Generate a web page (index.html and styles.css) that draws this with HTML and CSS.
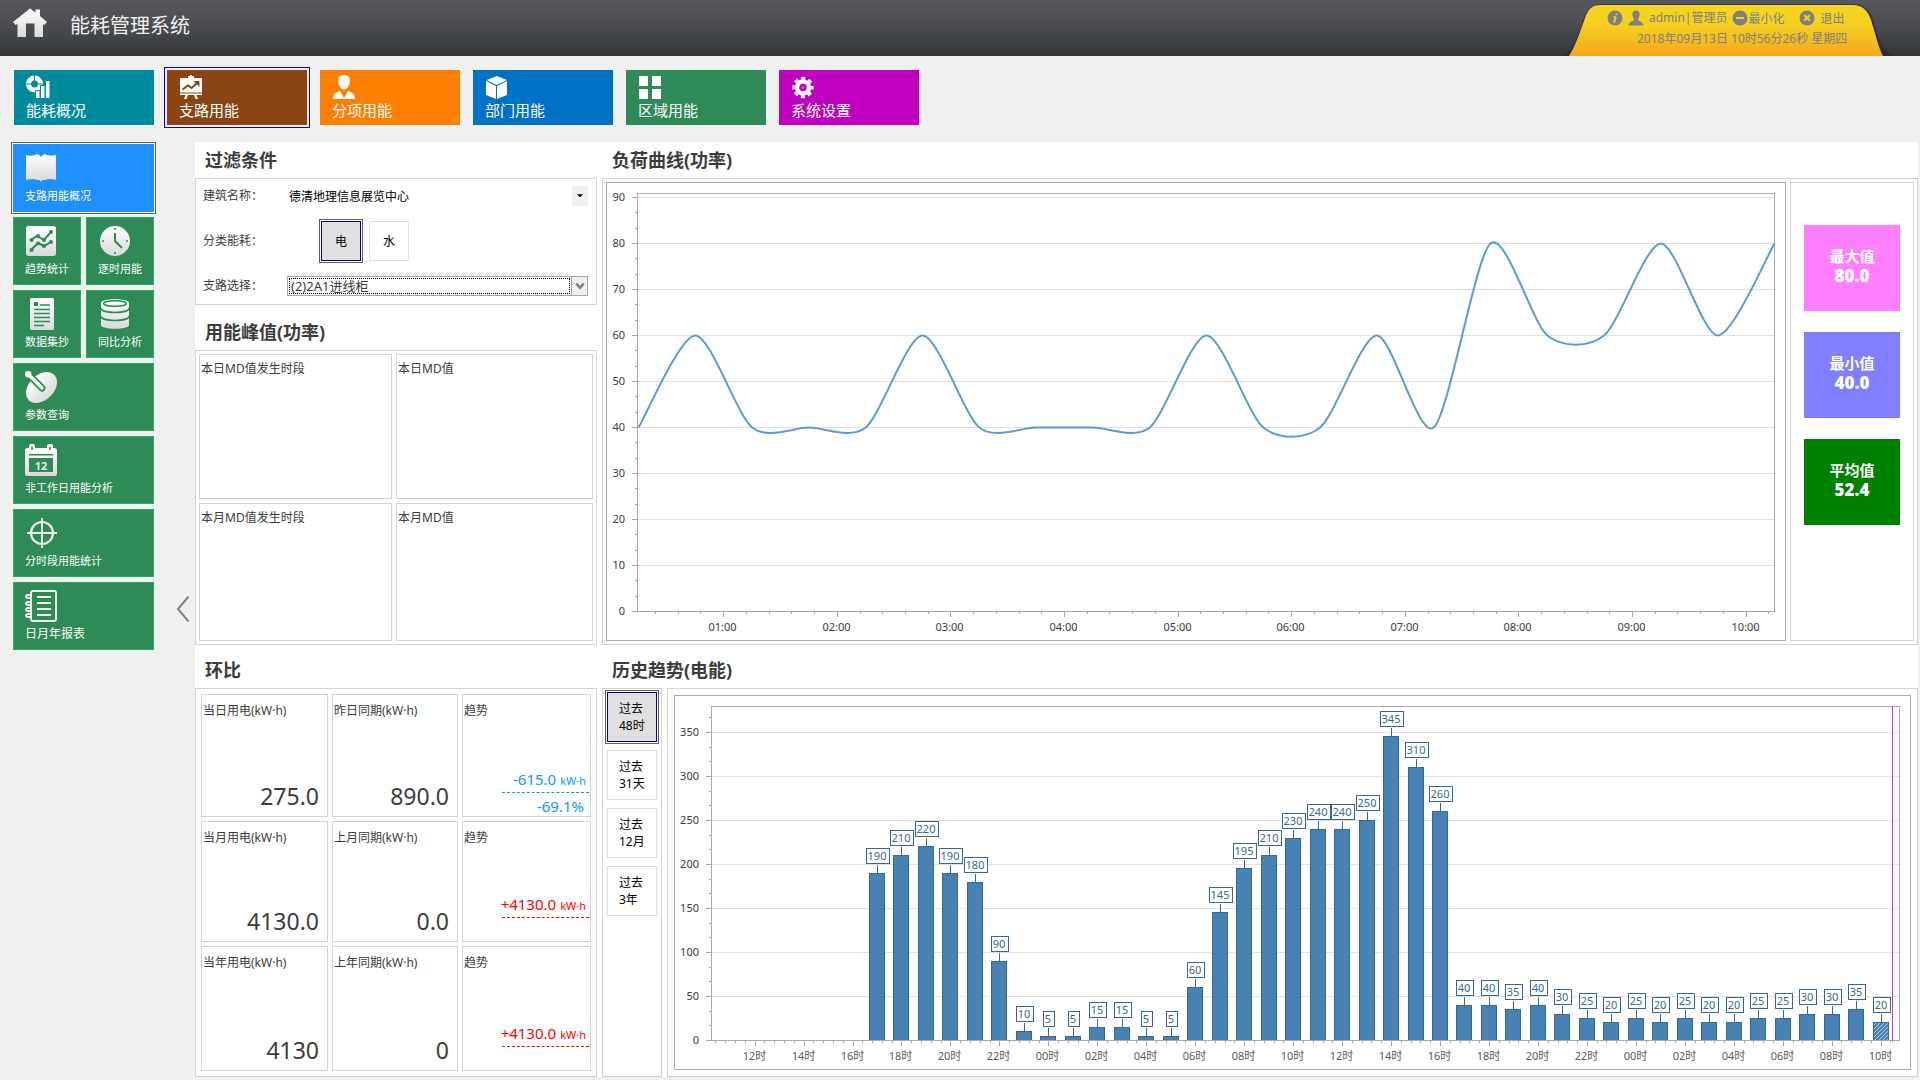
FILE: index.html
```html
<!DOCTYPE html>
<html lang="zh-CN">
<head>
    <meta charset="UTF-8">
    <meta name="viewport" content="width=device-width, initial-scale=1.0">
    <title>能耗管理系统</title>
    <link rel="stylesheet" href="styles.css">
</head>
<body>
    <header class="topbar">
        <svg class="home-icon" viewBox="0 0 34 30" aria-hidden="true">
            <defs>
                <linearGradient id="silver" x1="0" y1="0" x2="0" y2="1">
                    <stop offset="0" stop-color="#ffffff"/>
                    <stop offset="1" stop-color="#d9d9d9"/>
                </linearGradient>
            </defs>
            <path fill="url(#silver)" d="M17 0.5 L22.5 4.5 V1.5 H27 V8 L34 14 L31.5 17 L30 16 V29 H21.500 V15.500 H13 V29 H4.500 V16 L2.500 17 L0 14 Z"/>
        </svg>
        <h1>能耗管理系统</h1>
        <div class="user-tab">
            <svg class="tab-shape" viewBox="0 0 340 56" aria-hidden="true">
                <defs>
                    <linearGradient id="gold" x1="0" y1="0" x2="0" y2="1">
                        <stop offset="0" stop-color="#f5d521"/>
                        <stop offset="0.4" stop-color="#f4cf22"/>
                        <stop offset="1" stop-color="#f4a71a"/>
                    </linearGradient>
                </defs>
                <path fill="#26282b" fill-opacity="0.6" d="M0 56 C12 54 18 38 23 20 Q28 5 40 4 H293 Q309 4 314 22 C320 42 324 55 338 56 Z"/>
                <path fill="url(#gold)" d="M9 56 C16 45 20 32 25 18 Q29 5 40 5 H293 Q306 5 311 20 C316 36 318 46 323 56 Z"/>
            </svg>
            <div class="user-row">
                <button class="tab-btn" aria-label="信息">
                    <svg viewBox="0 0 16 16"><circle cx="8" cy="8" r="7.500" fill="#808080"/><path d="M9.500 3.500 V5 M9 7 L7 12.500 M6.500 7.200 H9" stroke="#f4d022" stroke-width="1.800" fill="none"/></svg>
                </button>
                <svg viewBox="0 0 16 16" aria-hidden="true"><path fill="#808080" d="M8 0.500 C11.500 0.500 12 3.500 11.500 5.500 C11 8 10.200 9 10 10 C11 11.500 15 11.500 15.500 15.500 H0.500 C1 11.500 5 11.500 6 10 C5.800 9 5 8 4.500 5.500 C4 3.500 4.500 0.500 8 0.500 Z"/></svg>
                <span>admin|管理员</span>
                <button class="tab-btn">
                    <svg viewBox="0 0 16 16"><circle cx="8" cy="8" r="7.500" fill="#808080"/><path d="M4 8 H12" stroke="#f4d022" stroke-width="2"/></svg>最小化
                </button>
                <button class="tab-btn exit">
                    <svg viewBox="0 0 16 16"><circle cx="8" cy="8" r="7.500" fill="#808080"/><path d="M5.200 5.200 L10.800 10.800 M10.800 5.200 L5.200 10.800" stroke="#f4d022" stroke-width="2.200"/></svg>退出
                </button>
            </div>
            <div class="clock">2018年09月13日 10时56分26秒 星期四</div>
        </div>
    </header>

    <nav class="main-nav">
        <button class="nav-tile teal">
            <svg viewBox="0 0 24 24" fill="#fff"><path fill-rule="evenodd" d="M8.500 0.500 A8.500 8.500 0 1 0 8.500 17.500 A8.500 8.500 0 1 0 8.500 0.500 Z M8.500 5.500 A3.500 3.500 0 1 1 8.500 12.500 A3.500 3.500 0 1 1 8.500 5.500 Z"/><path d="M8.500 0 V6 M0 9 H5.500 M11.500 9 H17.500" stroke="#008b9d" stroke-width="1.200"/><path stroke="#008b9d" d="M9.500 15.500 H14 V23.500 H9.500 Z M14.500 10.500 H19 V23.500 H14.500 Z M19.500 5.500 H24 V23.500 H19.500 Z"/></svg>
            能耗概况
        </button>
        <button class="nav-tile brown selected">
            <svg viewBox="0 0 24 24" fill="#fff"><path d="M9 1 H11 V0 H13 V1 H15 V3 H23 V17.500 H1 V3 H9 Z M1 18.500 H23 V20 H17.500 L19 24 H16.500 L15 20 H9 L7.500 24 H5 L6.500 20 H1 Z"/><path d="M3.500 14.500 L9 10.500 L12.500 13 L18 8" fill="none" stroke="#8b4513" stroke-width="2"/><path fill="#8b4513" d="M14.500 6 H20.500 V12 Z"/></svg>
            支路用能
        </button>
        <button class="nav-tile orange">
            <svg viewBox="0 0 24 24" fill="#fff"><path d="M12 0 C17.500 0 18.500 4 17.500 8 C16.500 12 14.500 14.500 12 14.500 C9.500 14.500 7.500 12 6.500 8 C5.500 4 6.500 0 12 0 Z M8 16 L12 23 L16 16 C20 17.500 23 19 23 24 H1 C1 19 4 17.500 8 16 Z"/></svg>
            分项用能
        </button>
        <button class="nav-tile blue">
            <svg viewBox="0 0 24 24" fill="#fff"><path d="M12 1 L22 5 L11.500 10 L1.500 5 Z M1 6 L11 11 V24 L1 20 Z M22 6 L12 11 V24 L22 20 Z"/></svg>
            部门用能
        </button>
        <button class="nav-tile green">
            <svg viewBox="0 0 24 24" fill="#fff"><path d="M1 1 H10 V11 H1 Z M14 1 H23 V11 H14 Z M1 14 H10 V24 H1 Z M14 14 H23 V24 H14 Z"/></svg>
            区域用能
        </button>
        <button class="nav-tile purple">
            <svg viewBox="0 0 24 24"><circle cx="12" cy="12.500" r="6" fill="none" stroke="#fff" stroke-width="4.500"/><circle cx="12" cy="12.500" r="9" fill="none" stroke="#fff" stroke-width="3.400" stroke-dasharray="3.900 3.169" stroke-dashoffset="1.950"/><circle cx="12" cy="12.500" r="1.600" fill="#fff" fill-opacity="0.300"/></svg>
            系统设置
        </button>
    </nav>

    <div class="page">
        <aside class="side-menu">
            <button class="side-tile wide selected">
                <svg viewBox="0 0 32 32"><path fill="url(#silver)" d="M1 3 Q8 5 12 2 Q14 2 16 5 Q18 2 20 2 Q24 5 31 3 V28 Q24 26 20 28 L17.500 28 L16 30 L14.500 28 L12 28 Q8 26 1 28 Z"/></svg>
                支路用能概况
            </button>
            <button class="side-tile">
                <svg viewBox="0 0 32 32"><rect x="1" y="1" width="30" height="30" rx="2.500" fill="url(#silver)"/><g fill="none" stroke="#2e8b57" stroke-width="2"><path d="M6 15 L12 11 L19 15 L26 7"/><path d="M6 25 L13 18 L19 21 L26 17"/></g><g fill="#2e8b57"><circle cx="6.500" cy="15" r="2"/><circle cx="13" cy="11" r="2"/><circle cx="19" cy="15" r="2"/><circle cx="26" cy="7" r="2"/><circle cx="6.500" cy="25" r="2"/><circle cx="13" cy="18.500" r="2"/><circle cx="19" cy="21" r="2"/><circle cx="26" cy="17" r="2"/></g></svg>
                趋势统计
            </button>
            <button class="side-tile">
                <svg viewBox="0 0 32 32"><circle cx="17" cy="16" r="15" fill="url(#silver)"/><path d="M17 8 V16 L24 23" fill="none" stroke="#2e8b57" stroke-width="2"/><g fill="#2e8b57"><circle cx="17" cy="4" r="1"/><circle cx="17" cy="28" r="1"/><circle cx="5" cy="16" r="1"/><circle cx="29" cy="16" r="1"/></g></svg>
                逐时用能
            </button>
            <button class="side-tile">
                <svg viewBox="0 0 32 32"><rect x="5" width="24" height="32" rx="1.500" fill="url(#silver)"/><rect x="9" y="4" width="4" height="4" fill="#2e8b57"/><path d="M15 7 H25 M9 11.500 H25 M9 15.500 H25 M9 19.500 H25 M9 23.500 H25 M9 27.500 H19" stroke="#2e8b57" stroke-width="1.500"/></svg>
                数据集抄
            </button>
            <button class="side-tile">
                <svg viewBox="0 0 32 32"><path fill="url(#silver)" d="M3 5 C3 0 31 0 31 5 V27 C31 32 3 32 3 27 Z"/><g fill="none" stroke="#2e8b57" stroke-width="1.600"><ellipse cx="17" cy="5.500" rx="11.500" ry="2.800"/><path d="M3 10 C3 16 31 16 31 10 M3 18 C3 24 31 24 31 18"/></g></svg>
                同比分析
            </button>
            <button class="side-tile wide">
                <svg viewBox="0 0 32 32"><ellipse cx="16.500" cy="16.500" rx="18" ry="12.500" transform="rotate(-45 16.500 16.500)" fill="url(#silver)"/><path d="M3 3 L17 17" stroke="#2e8b57" stroke-width="7" stroke-linecap="round"/><path d="M3 3 L17 17" stroke="#f4f4f4" stroke-width="3.500" stroke-linecap="round"/><circle cx="3.200" cy="3.200" r="3.200" fill="#fff"/></svg>
                参数查询
            </button>
            <button class="side-tile wide">
                <svg viewBox="0 0 32 32"><rect y="4" width="32" height="28" rx="2.500" fill="url(#silver)"/><rect x="4" width="6" height="7" rx="2" fill="#fff"/><rect x="22" width="6" height="7" rx="2" fill="#fff"/><path d="M7 3 V6 M25 3 V6 M4 10.800 H28" stroke="#2e8b57" stroke-width="1.600"/><rect x="4" y="14" width="24" height="14" fill="#2e8b57"/><text x="16" y="26" class="cal-day">12</text></svg>
                非工作日用能分析
            </button>
            <button class="side-tile wide">
                <svg viewBox="0 0 32 32" fill="none" stroke="#f0f0f0"><circle cx="17" cy="16" r="11" stroke-width="2.200"/><path d="M17 1 V31 M2 16 H32" stroke-width="1.800"/></svg>
                分时段用能统计
            </button>
            <button class="side-tile wide report">
                <svg viewBox="0 0 32 32" fill="none" stroke="#f0f0f0"><rect x="6" y="1" width="25" height="30" rx="2" stroke-width="2"/><path d="M12 7 H26 M12 13 H26 M12 19 H26 M12 25 H26" stroke-width="2"/><path d="M7 5 H3 Q1 5 1 7 Q1 8 3 8 H7 M7 12 H3 Q1 12 1 13.500 Q1 15 3 15 H7 M7 18 H3 Q1 18 1 19.500 Q1 21 3 21 H7 M7 24 H3 Q1 24 1 25.500 Q1 27 3 27 H7" stroke-width="1.800"/></svg>
                日月年报表
            </button>
        </aside>

        <button class="collapse" aria-label="收起菜单">
            <svg viewBox="0 0 14 26"><path d="M12.500 0.500 L2 13 L12.500 25.500" fill="none" stroke="#808080" stroke-width="2"/></svg>
        </button>

        <main class="content">
            <div class="column">
                <section class="block">
                    <h2>过滤条件</h2>
                    <form class="panel filter">
                        <div class="field">
                            <label for="building">建筑名称：</label>
                            <div class="picker flat">
                                <select id="building">
                                    <option>德清地理信息展览中心</option>
                                </select>
                                <span class="arrow"><svg viewBox="0 0 8 8"><path d="M1.500 2.500 H6.500 L4 5 Z" fill="#000"/></svg></span>
                            </div>
                        </div>
                        <div class="field">
                            <span class="field-name">分类能耗：</span>
                            <div class="kinds">
                                <button type="button" class="choice selected">电</button>
                                <button type="button" class="choice">水</button>
                            </div>
                        </div>
                        <div class="field">
                            <label for="branch">支路选择：</label>
                            <div class="picker boxed">
                                <select id="branch">
                                    <option>(2)2A1进线柜</option>
                                </select>
                                <span class="arrow"><svg viewBox="0 0 8 8"><path d="M1 2 L4 5.500 L7 2" fill="none" stroke="#808080" stroke-width="2"/></svg></span>
                            </div>
                        </div>
                    </form>
                </section>
                <section class="block grow">
                    <h2>用能峰值(功率)</h2>
                    <div class="panel peak">
                        <div class="cell">本日MD值发生时段</div>
                        <div class="cell">本日MD值</div>
                        <div class="cell">本月MD值发生时段</div>
                        <div class="cell">本月MD值</div>
                    </div>
                </section>
            </div>

            <section class="block">
                <h2>负荷曲线(功率)</h2>
                <div class="panel load">
                    <div class="chart-box">
                        <svg id="loadChart" class="chart load-chart"></svg>
                    </div>
                    <div class="stats">
                        <div class="stat max">最大值<strong>80.0</strong></div>
                        <div class="stat min">最小值<strong>40.0</strong></div>
                        <div class="stat avg">平均值<strong>52.4</strong></div>
                    </div>
                </div>
            </section>

            <section class="block">
                <h2>环比</h2>
                <div class="panel compare">
                    <div class="cell">当日用电(kW·h)<span class="number">275.0</span></div>
                    <div class="cell">昨日同期(kW·h)<span class="number">890.0</span></div>
                    <div class="cell">趋势
                        <div class="trend down">
                            <div class="delta">-615.0 <small>kW·h</small></div>
                            <div class="percent">-69.1%</div>
                        </div>
                    </div>
                    <div class="cell">当月用电(kW·h)<span class="number">4130.0</span></div>
                    <div class="cell">上月同期(kW·h)<span class="number">0.0</span></div>
                    <div class="cell">趋势
                        <div class="trend up">
                            <div class="delta">+4130.0 <small>kW·h</small></div>
                            <div class="percent"></div>
                        </div>
                    </div>
                    <div class="cell">当年用电(kW·h)<span class="number">4130</span></div>
                    <div class="cell">上年同期(kW·h)<span class="number">0</span></div>
                    <div class="cell">趋势
                        <div class="trend up">
                            <div class="delta">+4130.0 <small>kW·h</small></div>
                            <div class="percent"></div>
                        </div>
                    </div>
                </div>
            </section>

            <section class="block">
                <h2>历史趋势(电能)</h2>
                <div class="history">
                    <div class="panel ranges">
                        <button class="choice range selected">过去<br>48时</button>
                        <button class="choice range">过去<br>31天</button>
                        <button class="choice range">过去<br>12月</button>
                        <button class="choice range">过去<br>3年</button>
                    </div>
                    <div class="panel history-panel">
                        <div class="chart-box">
                            <svg id="historyChart" class="chart history-chart"></svg>
                        </div>
                    </div>
                </div>
            </section>
        </main>
    </div>

    <script src="charts.js"></script>
</body>
</html>
```

FILE: styles.css
```css
* {
    box-sizing: border-box;
}
body {
    margin: 0;
    background: #f0f0f0;
    font-family: "Noto Sans", "Noto Sans CJK SC", sans-serif;
    font-size: 12px;
    line-height: 18px;
    color: #3c3c3c;
}
button, select {
    font-family: inherit;
    font-size: inherit;
    cursor: pointer;
}
h1, h2 {
    margin: 0;
}

/* top bar */
.topbar {
    display: flex;
    height: 56px;
    padding-left: 13px;
    background: linear-gradient(#57585d, #4c4d51 45%, #323638);
    color: #f0f0f0;
}
.home-icon {
    width: 34px;
    height: 30px;
    margin: 8px 23px 0 0;
}
.topbar h1 {
    font-size: 20px;
    font-weight: normal;
    line-height: 52px;
}
.user-tab {
    position: relative;
    width: 340px;
    margin-left: auto;
    margin-right: 20px;
    padding: 8px 0 0 47px;
    color: #808080;
    white-space: nowrap;
}
.tab-shape {
    position: absolute;
    left: 0;
    top: 0;
    width: 340px;
    height: 56px;
}
.user-row {
    position: relative;
    display: flex;
    align-items: center;
    height: 20px;
    gap: 5px;
}
.user-row svg {
    width: 16px;
    height: 16px;
}
.tab-btn {
    display: flex;
    align-items: center;
    padding: 0;
    border: none;
    background: none;
    color: #808080;
}
.exit {
    margin-left: 10px;
    gap: 5px;
}
.clock {
    position: relative;
    padding-left: 30px;
    line-height: 22px;
}

/* coloured tiles under the top bar */
.main-nav {
    display: flex;
    flex-wrap: wrap;
    gap: 13px;
    padding: 14px 14px 17px;
}
.nav-tile {
    display: flex;
    flex-direction: column;
    align-items: flex-start;
    width: 140px;
    height: 55px;
    padding: 5px 12px 0;
    border: none;
    color: #fff;
    font-size: 15px;
    line-height: 22px;
}
.nav-tile svg {
    width: 24px;
    height: 24px;
}
.teal { background: #008b9d; }
.brown { background: #8b4513; }
.orange { background: #ff8000; }
.blue { background: #0072c6; }
.green { background: #2e8b57; }
.purple { background: #c000c0; }
.nav-tile.selected {
    outline: 1px solid #0000ff;
    outline-offset: 2px;
}

.page {
    display: flex;
    padding: 0 2px 3px 13px;
}

/* left menu */
.side-menu {
    display: grid;
    grid-template-columns: 68px 68px;
    grid-auto-rows: 68px;
    gap: 5px;
    align-self: flex-start;
    padding-top: 2px;
}
.side-tile {
    display: flex;
    flex-direction: column;
    align-items: flex-start;
    gap: 4px;
    padding: 7px 0 0 11px;
    border: 1px solid #32a866;
    background: #2e8b57;
    color: #fff;
    font-size: 11px;
    line-height: 16px;
}
.side-tile svg {
    width: 32px;
    height: 32px;
}
.side-tile.wide {
    grid-column: span 2;
}
.side-tile.report {
    font-size: 12px;
}
.side-tile.selected {
    background: #1e90ff;
    border-color: #1e90ff;
    outline: 1px solid #606060;
    outline-offset: 1px;
    box-shadow: 0 0 0 1px #fff;
}
.cal-day {
    font-size: 11px;
    font-weight: bold;
    fill: #e8e8e8;
    text-anchor: middle;
}
.collapse {
    width: 41px;
    padding: 2px 0 0 22px;
    border: none;
    background: none;
    text-align: left;
}
.collapse svg {
    width: 14px;
    height: 26px;
}

/* panels */
.content {
    flex: 1;
    min-width: 0;
    display: grid;
    grid-template-columns: 402px minmax(0, 1fr);
    gap: 7px 5px;
    background: #fff;
}
.column {
    display: flex;
    flex-direction: column;
    gap: 9px;
}
.block {
    display: flex;
    flex-direction: column;
}
.grow {
    flex: 1;
}
.block h2 {
    padding-left: 10px;
    font-size: 18px;
    line-height: 36px;
}
.panel {
    border: 1px solid #d3d3d3;
    background: #fff;
}
.cell {
    display: flex;
    flex-direction: column;
    border: 1px solid #d3d3d3;
    padding: 7px 1px 0;
}

/* filter form */
.filter {
    display: flex;
    flex-direction: column;
    gap: 15px;
    padding: 7px 8px 8px 7px;
}
.field {
    display: flex;
    align-items: center;
}
.field label, .field-name {
    width: 84px;
    line-height: 20px;
}
.picker {
    flex: 1;
    display: grid;
    grid-template-columns: 1fr 16px;
    height: 20px;
}
.picker select {
    grid-area: 1 / 1 / 2 / 3;
    appearance: none;
    padding: 0 20px 0 2px;
    border: none;
    border-radius: 0;
    background: #fff;
    color: #000;
    outline: none;
}
.arrow {
    grid-area: 1 / 2;
    display: flex;
    align-items: center;
    justify-content: center;
    background: #f0f0f0;
    pointer-events: none;
}
.arrow svg {
    width: 10px;
    height: 10px;
}
.boxed {
    border: 1px solid #a9a9a9;
}
.boxed select {
    margin: 1px 17px 1px 1px;
    border: 1px dotted #000;
    padding: 0 0 0 1px;
    color: #3c3c3c;
    font-size: 13px;
    line-height: 14px;
}
.boxed .arrow {
    border-left: 1px solid #a9a9a9;
}
.kinds {
    display: flex;
    gap: 8px;
    padding-left: 34px;
}
.choice {
    width: 40px;
    height: 40px;
    padding: 0;
    border: 1px solid #dedede;
    background: #fff;
    color: #000;
}
.choice.selected {
    border-color: #00008b;
    background: #e0e0e0;
    outline: 1px solid #606060;
    outline-offset: 1px;
}

/* peak values */
.peak {
    flex: 1;
    display: grid;
    grid-template-columns: 193fr 197fr;
    grid-template-rows: 145fr 138fr;
    gap: 4px;
    padding: 3px;
}
.peak .cell {
    padding-top: 5px;
}

/* period comparison */
.compare {
    flex: 1;
    display: grid;
    grid-template-columns: 127fr 126fr 129fr;
    grid-template-rows: 123fr 121fr 125fr;
    gap: 4px;
    padding: 5px;
}
.number {
    margin-top: auto;
    padding: 0 7px 5px 0;
    font-size: 23px;
    line-height: 30px;
    text-align: right;
}
.trend {
    width: 87px;
    margin-top: auto;
    margin-left: auto;
    font-size: 15px;
}
.trend small {
    font-size: 11px;
}
.delta {
    display: flex;
    justify-content: flex-end;
    align-items: baseline;
    gap: 4px;
    padding-right: 3px;
    border-bottom: 1px dashed;
    line-height: 22px;
    white-space: nowrap;
}
.percent {
    height: 23px;
    padding: 4px 5px 0 0;
    text-align: right;
}
.down {
    color: #1296f7;
}
.up {
    color: #ff0000;
}

/* load curve */
.load {
    display: flex;
    gap: 4px;
    padding: 3px;
}
.chart-box {
    flex: 1;
    min-width: 0;
    border: 1px solid #a9a9a9;
}
.stats {
    display: flex;
    flex-direction: column;
    align-items: center;
    gap: 21px;
    width: 124px;
    padding-top: 42px;
    border: 1px solid #d3d3d3;
}
.stat {
    display: flex;
    flex-direction: column;
    justify-content: center;
    align-items: center;
    width: 96px;
    height: 86px;
    padding-bottom: 4px;
    color: #fff;
    font-size: 15px;
    font-weight: bold;
    line-height: 20px;
}
.stat strong {
    font-size: 17px;
}
.max { background: #ff80ff; }
.min { background: #8080ff; }
.avg { background: #008000; }

/* history */
.history {
    display: flex;
    gap: 5px;
}
.ranges {
    display: flex;
    flex-direction: column;
    gap: 8px;
    padding: 3px 4px;
}
.range {
    width: 50px;
    height: 50px;
    padding-left: 11px;
    line-height: 17px;
    text-align: left;
}
.history-panel {
    flex: 1;
    min-width: 0;
    padding: 6px;
}

/* charts */
.chart {
    display: block;
    width: 100%;
}
.load-chart {
    height: 457px;
}
.history-chart {
    height: 373px;
}
.chart text {
    font-size: 11px;
    fill: #3c3c3c;
}
.chart line, .chart rect {
    shape-rendering: crispEdges;
}
.axis {
    stroke: #a9a9a9;
    fill: none;
}
.gridline {
    stroke: #e0e0e0;
}
.curve {
    fill: none;
    stroke: #5b9bd5;
    stroke-width: 2;
}
.bar {
    fill: #4682b4;
    stroke: #386890;
}
.tag {
    fill: #fff;
    stroke: #386890;
}
.tag-line {
    stroke: #386890;
}
.chart .tag-text {
    fill: #386890;
    text-anchor: middle;
}
.now {
    stroke: #e030d0;
}
.chart .y-label {
    text-anchor: end;
}
.chart .x-label {
    text-anchor: middle;
}
.history-chart .x-label {
    fill: #5a5a5a;
}
```

FILE: charts.js
```js
const loadValues = [40, 60, 40, 40, 40, 60, 40, 40, 40, 40, 60, 40, 40, 60, 40, 80, 60, 60, 80, 60, 80];

// hourly values, first bar is 17:00
const historyValues = [
    190, 210, 220, 190, 180, 90, 10, 5, 5, 15, 15, 5, 5, 60, 145, 195, 210, 230, 240, 240, 250,
    345, 310, 260, 40, 40, 35, 40, 30, 25, 20, 25, 20, 25, 20, 20, 25, 25, 30, 30, 35, 20
];

function add(svg, name, attrs, text) {
    const el = document.createElementNS('http://www.w3.org/2000/svg', name);
    for (const key in attrs) {
        el.setAttribute(key, attrs[key]);
    }
    if (text !== undefined) {
        el.textContent = text;
    }
    svg.appendChild(el);
    return el;
}

function line(svg, cls, x1, y1, x2, y2) {
    add(svg, 'line', { class: cls, x1: x1, y1: y1, x2: x2, y2: y2 });
}

// half pixel position, keeps 1px strokes sharp
function snap(v) {
    return Math.floor(v) + 0.5;
}

// frame, horizontal grid and y axis with two minor ticks per step
function drawFrame(svg, plot, step, last, max) {
    const scale = (plot.bottom - plot.top) / max;
    for (let i = 0; i * step / 3 <= max; i++) {
        const value = i * step / 3;
        const y = snap(plot.bottom + 0.5 - value * scale);
        if (i % 3 === 0 && value <= last) {
            if (i > 0) {
                line(svg, 'gridline', plot.left, y, plot.right, y);
            }
            line(svg, 'axis', plot.left - 5, y, plot.left, y);
            add(svg, 'text', { class: 'y-label', x: plot.left - 12, y: y + 3.5 }, value);
        } else {
            line(svg, 'axis', plot.left - 2, y, plot.left, y);
        }
    }
    add(svg, 'rect', {
        class: 'axis', x: plot.left + 0.5, y: plot.top + 0.5,
        width: plot.right - plot.left, height: plot.bottom - plot.top
    });
    return scale;
}

function drawLoad() {
    const svg = document.getElementById('loadChart');
    svg.innerHTML = '';
    const plot = { left: 30, top: 10, right: svg.clientWidth - 11, bottom: 428 };
    const scale = drawFrame(svg, plot, 10, 90, 90.87);
    const start = 0.25;
    const hour = (plot.right - plot.left - 1) / 10;
    const xOf = h => plot.left + 1.5 + (h - start) * hour;

    for (let i = 2; i <= 51; i++) {
        const x = snap(xOf(i / 5));
        const major = i % 5 === 0;
        line(svg, 'axis', x, plot.bottom, x, plot.bottom + (major ? 6 : 3));
        if (major) {
            add(svg, 'text', { class: 'x-label', x: x - 1, y: plot.bottom + 20 }, String(i / 5).padStart(2, '0') + ':00');
        }
    }

    const pts = loadValues.map((v, i) => [xOf(start + i / 2), plot.bottom + 0.5 - v * scale]);
    const t = 0.8 / 6;
    let d = 'M' + pts[0];
    for (let i = 0; i < pts.length - 1; i++) {
        const p0 = pts[i - 1] || pts[i];
        const p1 = pts[i];
        const p2 = pts[i + 1];
        const p3 = pts[i + 2] || p2;
        d += ' C' + [
            p1[0] + (p2[0] - p0[0]) * t, p1[1] + (p2[1] - p0[1]) * t,
            p2[0] - (p3[0] - p1[0]) * t, p2[1] - (p3[1] - p1[1]) * t,
            p2[0], p2[1]
        ];
    }
    add(svg, 'path', { class: 'curve', d: d });
}

function drawHistory() {
    const svg = document.getElementById('historyChart');
    svg.innerHTML = '<defs><pattern id="hatch" width="4" height="4" patternUnits="userSpaceOnUse">' +
        '<rect width="4" height="4" fill="#4682b4"/><path d="M-1 1 L1 -1 M0 4 L4 0 M3 5 L5 3" stroke="#b5cde1"/></pattern></defs>';
    const plot = { left: 36, top: 10, right: svg.clientWidth - 11, bottom: 344 };
    const scale = drawFrame(svg, plot, 50, 350, 379.5);
    const hour = (plot.right - plot.left) / 48.53;
    const xOf = h => plot.left + 1 + (h - 10.24) * hour;

    for (let i = 26; i <= 146; i++) {
        const x = snap(xOf(i * 0.4));
        if (x > plot.right) {
            break;
        }
        const major = i % 5 === 0;
        line(svg, 'axis', x, plot.bottom, x, plot.bottom + (major ? 6 : 3));
        if (major) {
            const label = String(i * 2 / 5 % 24).padStart(2, '0') + '时';
            add(svg, 'text', { class: 'x-label', x: x - 1, y: plot.bottom + 20 }, label);
        }
    }

    historyValues.forEach((v, i) => {
        const x = snap(xOf(17 + i));
        const top = snap(plot.bottom + 0.5 - v * scale);
        const bar = add(svg, 'rect', { class: 'bar', x: x - 8, y: top, width: 15, height: plot.bottom + 0.5 - top });
        if (i === historyValues.length - 1) {
            bar.style.fill = 'url(#hatch)';
        }
        const width = 5 + 6 * String(v).length;
        line(svg, 'tag-line', x, top - 9, x, top);
        add(svg, 'rect', { class: 'tag', x: Math.floor(x - width / 2) + 0.5, y: top - 25, width: width, height: 15 });
        add(svg, 'text', { class: 'tag-text', x: x - 0.5, y: top - 13.5 }, v);
    });

    line(svg, 'axis', plot.left, plot.bottom + 0.5, plot.right, plot.bottom + 0.5);
    line(svg, 'now', plot.right - 6.5, plot.top, plot.right - 6.5, plot.bottom + 1);
}

function drawAll() {
    drawLoad();
    drawHistory();
}

drawAll();
window.addEventListener('resize', drawAll);
```
